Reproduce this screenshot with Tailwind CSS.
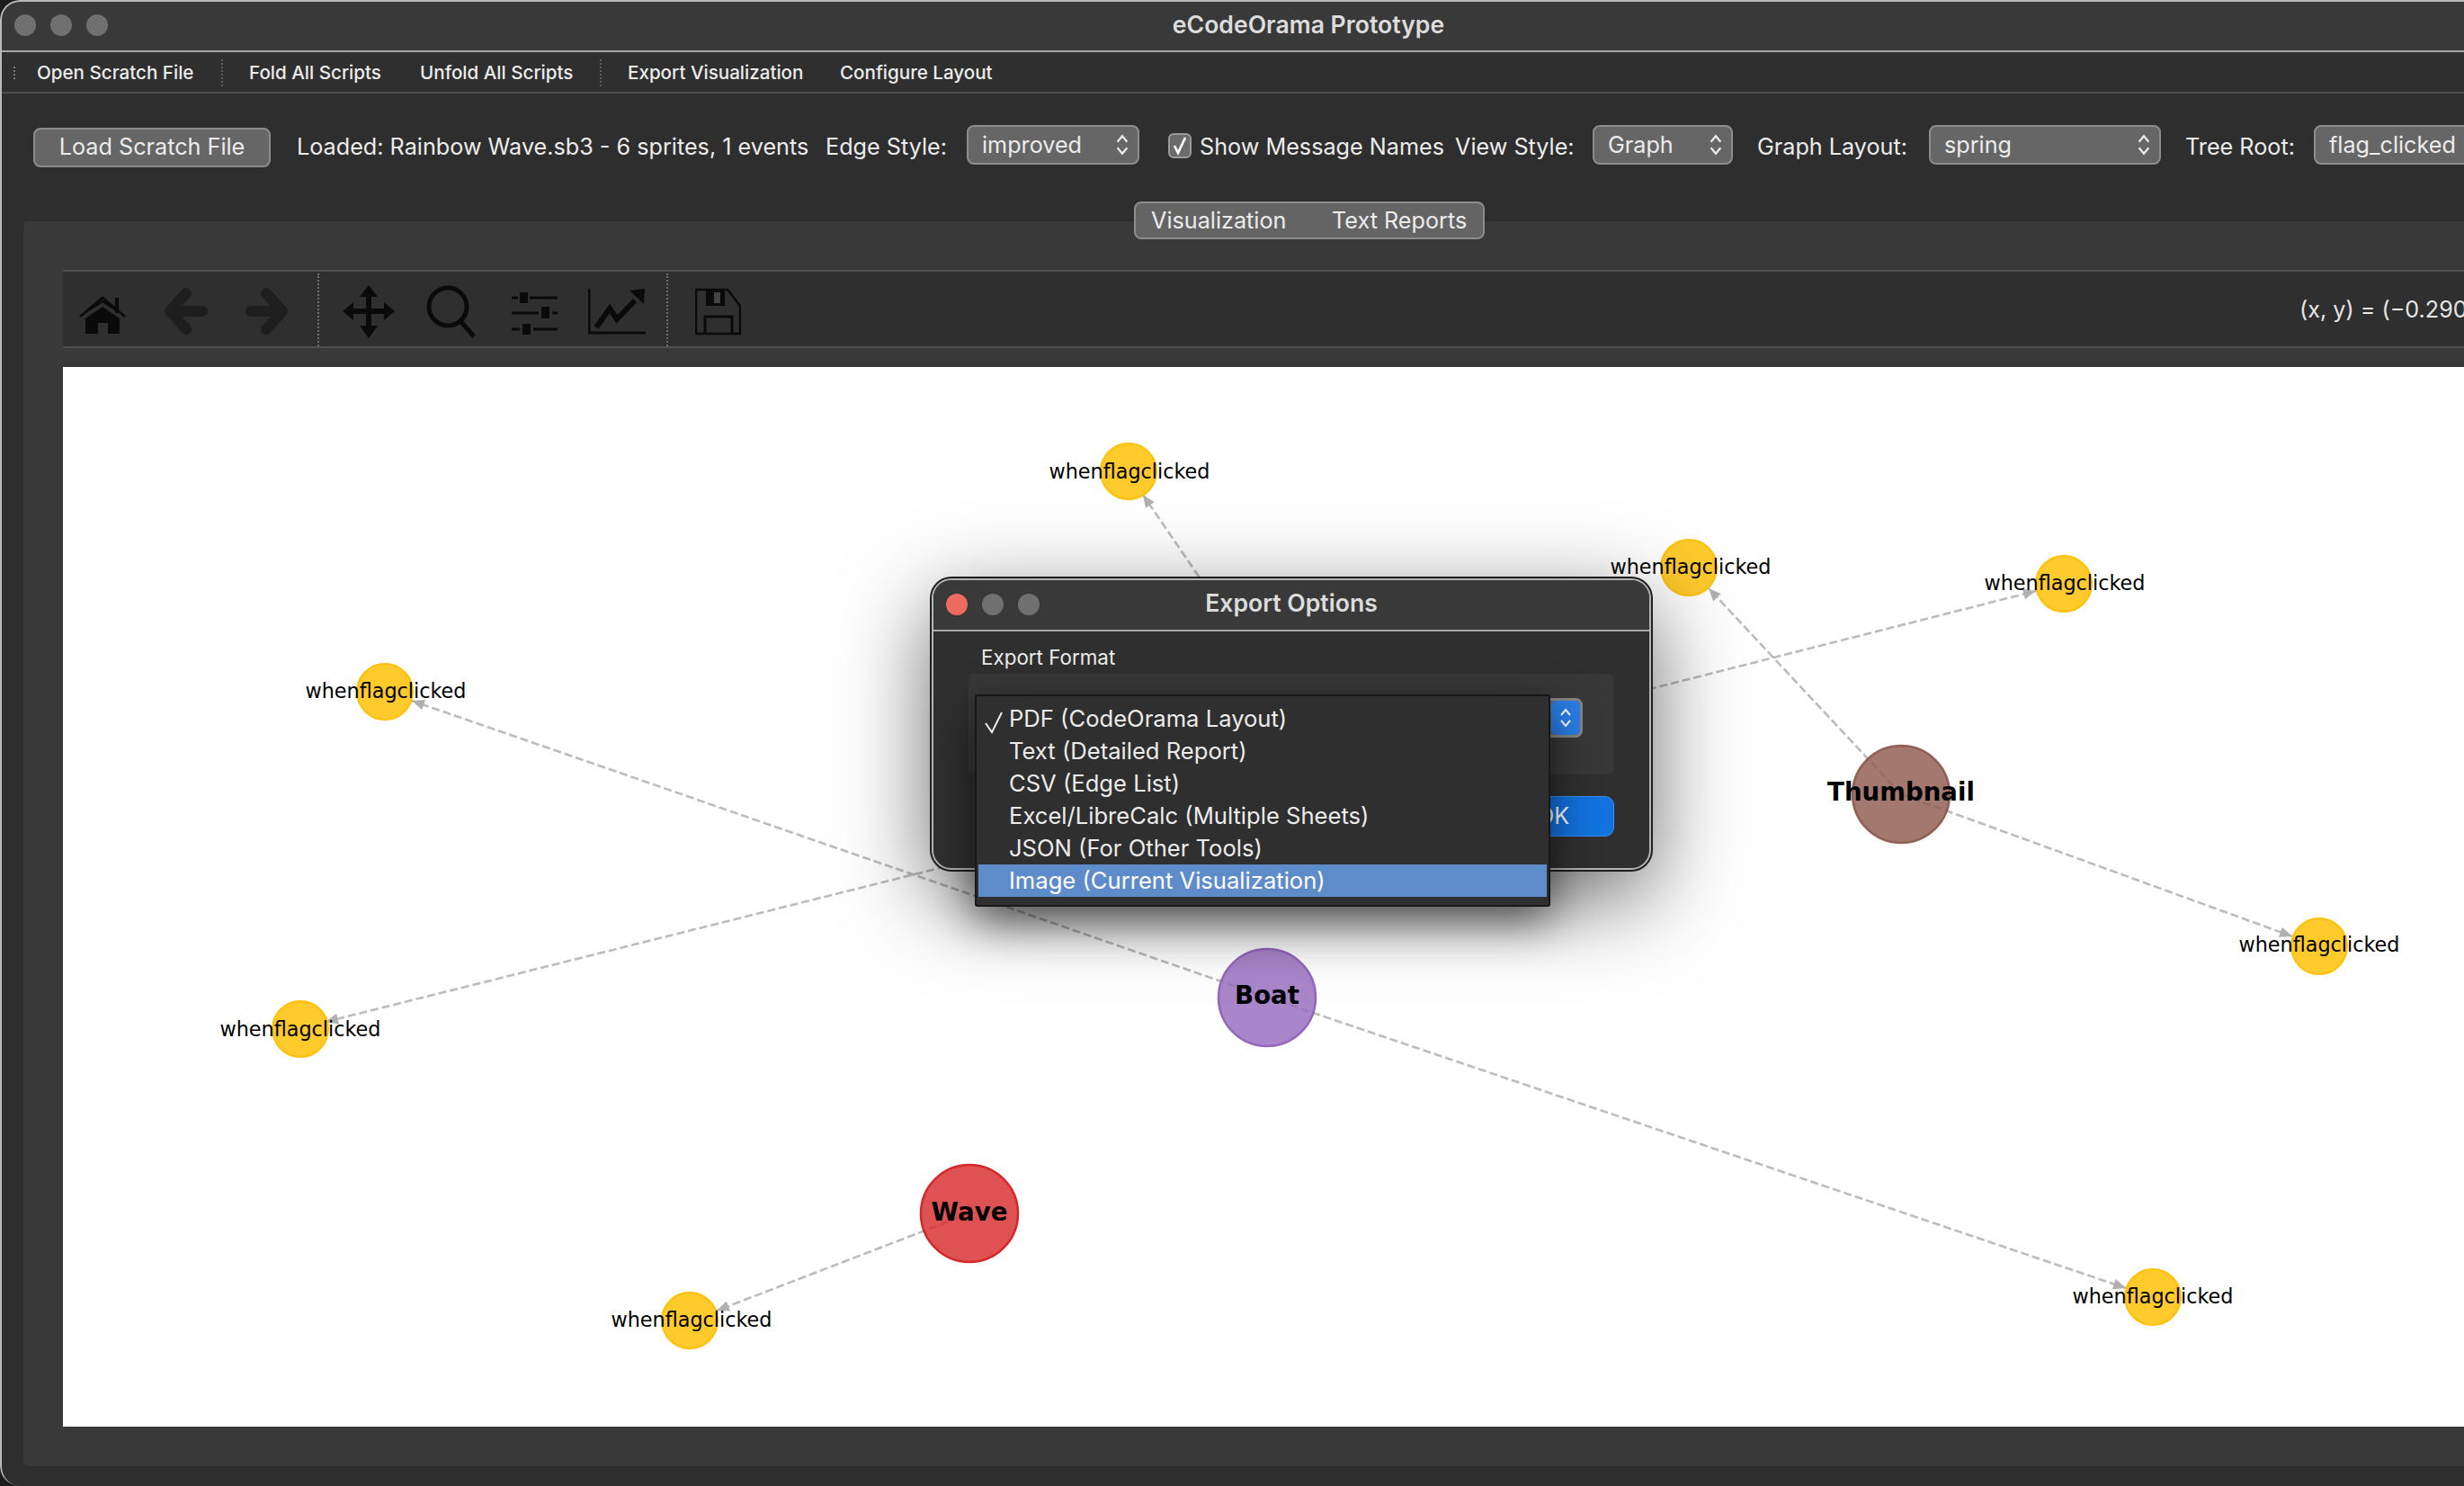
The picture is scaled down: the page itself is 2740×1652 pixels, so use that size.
<!DOCTYPE html>
<html lang="en">
<head>
<meta charset="utf-8" />
<title>eCodeOrama Prototype</title>
<script src="https://cdn.jsdelivr.net/npm/@tailwindcss/browser@4"></script>
</head>
<body class="bg-[#1c1c1c] overflow-hidden">
<div class="relative w-[2740px] h-[1652px] overflow-hidden rounded-l-[22px] bg-[#2e2e2e] font-['Inter','Liberation_Sans',sans-serif] text-[#ececec]">

  <!-- title bar -->
  <header class="relative flex items-center justify-center h-[58px] bg-[#393939] border-b-2 border-[#a8a8a8]">
    <div class="absolute left-[16px] top-[16px] flex gap-[16px]">
      <span class="w-[24px] h-[24px] rounded-full bg-[#707070]"></span>
      <span class="w-[24px] h-[24px] rounded-full bg-[#707070]"></span>
      <span class="w-[24px] h-[24px] rounded-full bg-[#707070]"></span>
    </div>
    <h1 class="ml-[170px] text-[26.6px] font-semibold text-[#dcdcdc]">eCodeOrama Prototype</h1>
  </header>

  <!-- menu bar -->
  <nav class="flex items-center h-[46px] pt-[2px] bg-[#2f2f2f] border-b-2 border-[#4d4d4d] text-[20.6px] font-medium whitespace-nowrap">
    <span class="ml-[15px] h-[14px] border-l-2 border-dotted border-[#777]"></span>
    <span class="ml-[24px] w-[175px]">Open Scratch File</span>
    <span class="ml-[30px] h-[30px] border-l-2 border-dotted border-[#5c5c5c]"></span>
    <span class="ml-[29px] w-[149px]">Fold All Scripts</span>
    <span class="ml-[41px] w-[171px]">Unfold All Scripts</span>
    <span class="ml-[29px] h-[30px] border-l-2 border-dotted border-[#5c5c5c]"></span>
    <span class="ml-[29px] w-[195px]">Export Visualization</span>
    <span class="ml-[41px] w-[169px]">Configure Layout</span>
  </nav>

  <!-- controls -->
  <div class="flex items-start w-[2900px] h-[120px] pt-[35px] pl-[37px] text-[25.2px] whitespace-nowrap">
    <button class="shrink-0 w-[264px] h-[44px] mt-[3px] rounded-[8px] bg-[#666] border-2 border-[#8d8d8d] text-center">Load Scratch File</button>
    <span class="shrink-0 ml-[29px] w-[570px] h-[48px] leading-[48px]">Loaded: Rainbow Wave.sb3 - 6 sprites, 1 events</span>
    <span class="shrink-0 ml-[18px] w-[135px] h-[48px] leading-[48px]">Edge Style:</span>
    <div class="shrink-0 ml-[22px] w-[192px] h-[44px] pl-[15px] pr-[9px] pt-[2px] flex items-center justify-between rounded-[8px] bg-[#666] border-2 border-[#8d8d8d]">
      improved
      <svg class="w-[16px] h-[26px] -mt-[2px]" viewBox="0 0 14 24" fill="none" stroke="#ececec" stroke-width="2"><path d="M2 9 7 3l5 6M2 15l5 6 5-6" /></svg>
    </div>
    <div class="shrink-0 ml-[32px] mt-[9px] w-[26px] h-[28px] rounded-[6px] bg-[#6b6b6b] border-2 border-[#9a9a9a] flex items-center justify-center">
      <svg class="w-[20px] h-[22px]" viewBox="0 0 20 22" fill="none" stroke="#fff" stroke-width="2.6"><path d="M4 11l4 8L16 2" /></svg>
    </div>
    <span class="shrink-0 ml-[9px] w-[270px] h-[48px] leading-[48px]">Show Message Names</span>
    <span class="shrink-0 ml-[14px] w-[131px] h-[48px] leading-[48px]">View Style:</span>
    <div class="shrink-0 ml-[22px] w-[156px] h-[44px] pl-[15px] pr-[9px] pt-[2px] flex items-center justify-between rounded-[8px] bg-[#666] border-2 border-[#8d8d8d]">
      Graph
      <svg class="w-[16px] h-[26px] -mt-[2px]" viewBox="0 0 14 24" fill="none" stroke="#ececec" stroke-width="2"><path d="M2 9 7 3l5 6M2 15l5 6 5-6" /></svg>
    </div>
    <span class="shrink-0 ml-[27px] w-[167px] h-[48px] leading-[48px]">Graph Layout:</span>
    <div class="shrink-0 ml-[24px] w-[258px] h-[44px] pl-[15px] pr-[9px] pt-[2px] flex items-center justify-between rounded-[8px] bg-[#666] border-2 border-[#8d8d8d]">
      spring
      <svg class="w-[16px] h-[26px] -mt-[2px]" viewBox="0 0 14 24" fill="none" stroke="#ececec" stroke-width="2"><path d="M2 9 7 3l5 6M2 15l5 6 5-6" /></svg>
    </div>
    <span class="shrink-0 ml-[27px] w-[121px] h-[48px] leading-[48px]">Tree Root:</span>
    <div class="shrink-0 ml-[22px] w-[220px] h-[44px] pl-[15px] pt-[2px] flex items-center rounded-[8px] bg-[#666] border-2 border-[#8d8d8d]">flag_clicked</div>
  </div>

  <!-- tabs -->
  <div class="relative z-10 pl-[1261px] -mb-[21px]">
    <div class="flex items-center w-[390px] h-[42px] pt-[2px] rounded-[8px] bg-[#646464] border-2 border-[#8d8d8d] text-[25.2px] whitespace-nowrap">
      <span class="ml-[17px] w-[151px]">Visualization</span>
      <span class="ml-[50px]">Text Reports</span>
    </div>
  </div>

  <!-- tab panel -->
  <section class="ml-[25px] w-[2800px] h-[1386px] pl-[44px] pt-[54px] bg-[#393939] border border-[#2b2b2b] rounded-[6px]">
    <!-- plot toolbar -->
    <div class="flex items-start h-[87px] pt-[12px] pl-[18px] bg-[#2f2f2f] border-y-2 border-[#505050]">
      <svg class="shrink-0 w-[52px] h-[63px]" viewBox="0 0 52 63" fill="none" stroke="#0a0a0a">
        <path d="M1 38 26 17l25 21M7 33 26 21l19 12" stroke-width="2.5" />
        <path d="M40 17h4v17h-4z" fill="#0a0a0a" stroke="none" />
        <path d="M26 27 45 40v17H32V45H21v12H7V40z" fill="#0a0a0a" stroke="none" />
      </svg>
      <svg class="shrink-0 ml-[43px] w-[48px] h-[63px]" viewBox="0 0 48 63" fill="none" stroke="#1e1e1e" stroke-width="12" stroke-linecap="round" stroke-linejoin="round">
        <path d="M42 32H8M24 12 6 32l18 20" />
      </svg>
      <svg class="shrink-0 ml-[42px] w-[47px] h-[63px]" viewBox="0 0 47 63" fill="none" stroke="#1e1e1e" stroke-width="12" stroke-linecap="round" stroke-linejoin="round">
        <path d="M6 32h34M23 12l18 20-18 20" />
      </svg>
      <span class="shrink-0 ml-[33px] -mt-[10px] h-[81px] border-l-2 border-dotted border-[#6e6e6e]"></span>
      <svg class="shrink-0 ml-[25px] w-[60px] h-[63px]" viewBox="0 0 60 63" fill="#0a0a0a" stroke="none">
        <path d="M30 3 20 16h7v13H13v-7L1 32l12 10v-7h14v13h-7l10 14 10-14h-7V35h14v7l12-10-12-10v7H33V16h7z" />
      </svg>
      <svg class="shrink-0 ml-[34px] w-[55px] h-[63px]" viewBox="0 0 55 63" fill="none" stroke="#0a0a0a" stroke-width="5">
        <circle cx="24" cy="27" r="21" />
        <path d="M38 43l15 17" />
      </svg>
      <svg class="shrink-0 ml-[40px] w-[51px] h-[63px]" viewBox="0 0 51 63" fill="none" stroke="#0a0a0a" stroke-width="3">
        <path d="M0 17h7M20 17h31M0 34h30M45 34h6M0 52h9M24 52h27" />
        <path d="M9 11h9v12H9zM33 27h9v13h-9zM12 46h9v12h-9z" fill="#0a0a0a" stroke="none" />
      </svg>
      <svg class="shrink-0 ml-[34px] w-[64px] h-[63px]" viewBox="0 0 64 63" fill="none" stroke="#0a0a0a">
        <path d="M1 7v49h63" stroke-width="3" />
        <path d="M9 50l15-21 8 12 20-21" stroke-width="6" />
        <path d="M46 9l17-2-1 17z" fill="#0a0a0a" stroke="none" />
      </svg>
      <span class="shrink-0 ml-[23px] -mt-[10px] h-[81px] border-l-2 border-dotted border-[#6e6e6e]"></span>
      <svg class="shrink-0 ml-[30px] w-[51px] h-[63px]" viewBox="0 0 51 63" fill="none" stroke="#0a0a0a" stroke-width="2.5">
        <path d="M1 8h35l14 18v31H1z" />
        <path d="M12 8h21v18H12z" fill="#0a0a0a" stroke="none" />
        <path d="M21 11h7v12h-7z" fill="#444" stroke="none" />
        <path d="M11 57V38h30v19" stroke-width="3" />
      </svg>
      <span class="shrink-0 ml-[1733px] text-[25.2px] leading-[60px] whitespace-nowrap text-[#e6e6e6]">(x, y) = (−0.290, 0.412)</span>
    </div>

    <!-- plot canvas -->
    <div class="mt-[21px] w-[2670px] h-[1178px] bg-white">
      <svg class="block font-['DejaVu_Sans',sans-serif]" width="2670" height="1178" viewBox="70 408 2670 1178">
        <defs>
          <marker id="tip" markerUnits="userSpaceOnUse" markerWidth="14" markerHeight="12" refX="14" refY="6" orient="auto">
            <path d="M0 0 14 6 0 12z" fill="#b0b0b0" />
          </marker>
        </defs>
        <g stroke="#bcbcbc" stroke-width="2.6" stroke-dasharray="9 4" fill="none">
          <line x1="1410" y1="1109" x2="458" y2="779" marker-end="url(#tip)" />
          <line x1="1410" y1="1109" x2="2364" y2="1432" marker-end="url(#tip)" />
          <line x1="2114" y1="883" x2="1900" y2="654" marker-end="url(#tip)" />
          <line x1="2114" y1="883" x2="2549" y2="1041" marker-end="url(#tip)" />
          <line x1="1480" y1="856" x2="1271" y2="550" marker-end="url(#tip)" />
          <line x1="1480" y1="856" x2="2264" y2="657" marker-end="url(#tip)" />
          <line x1="1480" y1="856" x2="362" y2="1136" marker-end="url(#tip)" />
          <line x1="1078" y1="1349" x2="797" y2="1457" marker-end="url(#tip)" />
        </g>
        <g fill="#ffc107" fill-opacity="0.85" stroke="#ffc107" stroke-width="2">
          <circle cx="1255" cy="524" r="31" />
          <circle cx="1878" cy="631" r="31" />
          <circle cx="2295" cy="649" r="31" />
          <circle cx="428" cy="769" r="31" />
          <circle cx="2579" cy="1052" r="31" />
          <circle cx="334" cy="1144" r="31" />
          <circle cx="767" cy="1468" r="31" />
          <circle cx="2394" cy="1442" r="31" />
        </g>
        <circle cx="2114" cy="883" r="54" fill="#8c564b" fill-opacity="0.8" stroke="#8c564b" stroke-opacity="0.9" stroke-width="2.5" />
        <circle cx="1409" cy="1109" r="54" fill="#9467bd" fill-opacity="0.8" stroke="#9467bd" stroke-width="2.5" />
        <circle cx="1078" cy="1349" r="54" fill="#d62728" fill-opacity="0.8" stroke="#d62728" stroke-width="2.5" />
        <g font-size="22.3" text-anchor="middle" fill="#000">
          <text x="1256" y="532">whenflagclicked</text>
          <text x="1880" y="638">whenflagclicked</text>
          <text x="2296" y="656">whenflagclicked</text>
          <text x="429" y="776">whenflagclicked</text>
          <text x="2579" y="1058">whenflagclicked</text>
          <text x="334" y="1152">whenflagclicked</text>
          <text x="769" y="1475">whenflagclicked</text>
          <text x="2394" y="1449">whenflagclicked</text>
        </g>
        <g font-size="27.6" font-weight="700" text-anchor="middle" fill="#000">
          <text x="2114" y="890">Thumbnail</text>
          <text x="1409" y="1116">Boat</text>
          <text x="1078" y="1357">Wave</text>
        </g>
      </svg>
    </div>
  </section>

  <!-- export dialog -->
  <div class="absolute z-20 left-[1036px] top-[643px] w-[800px] h-[324px] rounded-[22px] bg-[#2f2f2f] border-2 border-[#b4b4b4] ring-2 ring-[#1f1f1f] shadow-[0_30px_100px_rgba(0,0,0,0.6)]">
    <div class="relative flex items-center justify-center h-[57px] pb-[3px] bg-[#393939] rounded-t-[20px] border-b-2 border-[#a8a8a8]">
      <div class="absolute left-[14px] top-[15px] flex gap-[16px]">
        <span class="w-[24px] h-[24px] rounded-full bg-[#ec6a5e]"></span>
        <span class="w-[24px] h-[24px] rounded-full bg-[#707070]"></span>
        <span class="w-[24px] h-[24px] rounded-full bg-[#707070]"></span>
      </div>
      <h2 class="text-[26.6px] font-semibold text-[#dcdcdc]">Export Options</h2>
    </div>
    <p class="ml-[53px] mt-[16px] text-[22.4px] leading-[26px]">Export Format</p>
    <div class="ml-[39px] mt-[5px] w-[717px] h-[112px] pt-[27px] pl-[12px] bg-[#383838] rounded-[6px]">
      <div class="flex justify-end w-[671px] h-[44px] rounded-[8px] bg-[#666] border-[3px] border-[#858585]">
        <div class="flex items-center justify-center w-[32px] h-full rounded-[6px] bg-[#2a7ee8]">
          <svg class="w-[14px] h-[24px]" viewBox="0 0 14 24" fill="none" stroke="#fff" stroke-width="2"><path d="M2 9 7 3l5 6M2 15l5 6 5-6" /></svg>
        </div>
      </div>
    </div>
    <div class="flex justify-end mt-[24px] pr-[39px]">
      <button class="w-[136px] h-[45px] rounded-[10px] bg-[#1272df] border border-[#3b90ee] text-[25.2px] text-white text-center">OK</button>
    </div>

    <!-- open popup -->
    <ul class="absolute left-[46px] top-[127px] w-[640px] h-[236px] pt-[7px] px-[2px] bg-[#2f2f2f] border-2 border-[#171717] rounded-[3px] text-[25.6px] leading-[36px] shadow-[0_16px_50px_rgba(0,0,0,0.6)] whitespace-nowrap">
      <li class="relative h-[36px] pl-[34px]">
        <svg class="absolute left-[6px] top-[9px] w-[24px] h-[26px]" viewBox="0 0 24 26" fill="none" stroke="#ececec" stroke-width="2"><path d="M2 14l7 10L20 2" /></svg>
        PDF (CodeOrama Layout)
      </li>
      <li class="h-[36px] pl-[34px]">Text (Detailed Report)</li>
      <li class="h-[36px] pl-[34px]">CSV (Edge List)</li>
      <li class="h-[36px] pl-[34px]">Excel/LibreCalc (Multiple Sheets)</li>
      <li class="h-[36px] pl-[34px]">JSON (For Other Tools)</li>
      <li class="h-[36px] pl-[34px] bg-[#5e8bc9] text-white">Image (Current Visualization)</li>
    </ul>
  </div>

  <!-- window edge -->
  <div class="absolute inset-0 z-30 pointer-events-none rounded-l-[22px] border-l-2 border-t-2 border-[#b9b9b9]"></div>
</div>
</body>
</html>
